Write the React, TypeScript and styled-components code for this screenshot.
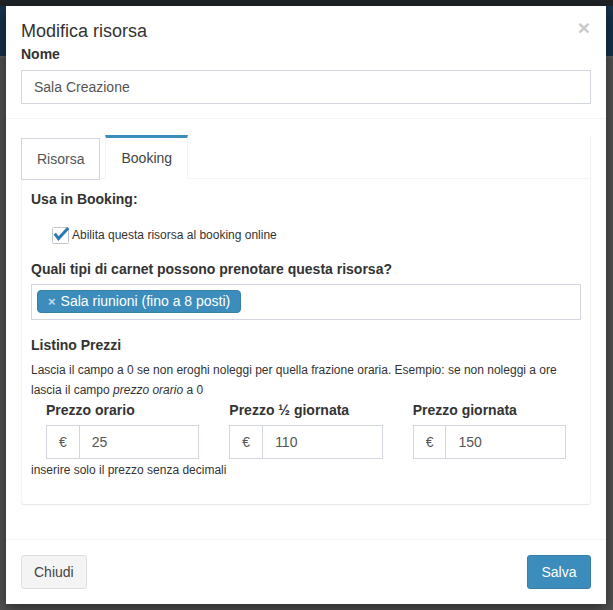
import React from "react";
import styled, { createGlobalStyle } from "styled-components";

const GlobalStyle = createGlobalStyle`
  html, body {
    margin: 0;
    padding: 0;
  }
  body {
    font-family: "Liberation Sans", Arial, sans-serif;
    font-size: 14px;
    line-height: 20px;
    color: #333;
    background: #515151;
  }
  * {
    box-sizing: border-box;
  }
`;

const Backdrop = styled.div`
  min-height: 610px;
  padding: 6px 0 0 6px;
  overflow: hidden;
  background: linear-gradient(
    to bottom,
    #1f2326 0,
    #1f2326 6px,
    #17324a 6px,
    #17324a 56px,
    #5d5d5d 56px,
    #5d5d5d 58px,
    #535353 58px
  );
`;

const Modal = styled.div`
  width: 600px;
  background: #fff;
  box-shadow: 0 5px 15px rgba(0, 0, 0, 0.5);
`;

const Header = styled.div`
  padding: 15px 15px 14px;
  border-bottom: 1px solid #f4f4f4;
`;

const TitleRow = styled.div`
  display: flex;
  justify-content: space-between;
  align-items: flex-start;
  margin-bottom: 3px;
`;

const Title = styled.h4`
  margin: 0;
  font-size: 18px;
  line-height: 20px;
  font-weight: 400;
  color: #333;
`;

const Close = styled.button`
  margin: -4px 1px 0 0;
  padding: 0;
  border: 0;
  background: none;
  font-family: inherit;
  font-size: 21px;
  font-weight: 700;
  line-height: 1;
  color: #c8c8c8;
  cursor: pointer;
`;

const FieldLabel = styled.label<{ $mt?: number; $mb?: number }>`
  display: block;
  margin-top: ${(p) => p.$mt ?? 0}px;
  margin-bottom: ${(p) => p.$mb ?? 5}px;
  font-weight: 700;
  color: #333;
`;

const TextInput = styled.input`
  display: block;
  width: 100%;
  height: 34px;
  padding: 6px 12px;
  border: 1px solid #d2d6de;
  border-radius: 0;
  font-family: inherit;
  font-size: 14px;
  line-height: 20px;
  color: #555;
  background: #fff;
  outline: none;
`;

const Body = styled.div`
  padding: 16px 15px 15px;
`;

const TabBox = styled.div`
  margin-bottom: 20px;
  background: #fff;
  border-radius: 3px;
  box-shadow: inset 1px 0 0 #f4f4f4, inset -1px 0 0 #f4f4f4,
    0 1px 1px rgba(0, 0, 0, 0.1);
`;

const TabNav = styled.div`
  display: flex;
  align-items: flex-end;
  gap: 5px;
  border-bottom: 1px solid #f4f4f4;
`;

const Tab = styled.div<{ $active?: boolean }>`
  padding: 10px 15px;
  background: #fff;
  color: ${(p) => (p.$active ? "#444" : "#555")};
  border: 1px solid ${(p) => (p.$active ? "#f4f4f4" : "#d2d6de")};
  border-top: ${(p) => (p.$active ? "3px solid #3c8dbc" : "1px solid #d2d6de")};
  border-bottom-color: ${(p) => (p.$active ? "#fff" : "#d2d6de")};
  margin-bottom: ${(p) => (p.$active ? -1 : -2)}px;
  cursor: pointer;
`;

const TabContent = styled.div`
  padding: 10px;
`;

const CheckRow = styled.label`
  display: flex;
  align-items: center;
  margin-top: 16px;
  padding-left: 21px;
  font-size: 12px;
  line-height: 20px;
  color: #333;

  svg {
    margin-right: 3px;
    overflow: visible;
  }
`;

const SelectBox = styled.div`
  display: flex;
  align-items: flex-start;
  height: 36px;
  padding: 5px 5px 0;
  border: 1px solid #d2d6de;
  background: #fff;
`;

const Choice = styled.span`
  display: inline-flex;
  align-items: center;
  height: 23px;
  padding: 0 10px;
  border: 1px solid #367fa9;
  border-radius: 4px;
  background: #3c8dbc;
  color: #fff;
  font-size: 14px;
  line-height: 21px;
`;

const ChoiceRemove = styled.span`
  margin-right: 5px;
  font-size: 13px;
  font-weight: 700;
  color: rgba(255, 255, 255, 0.7);
`;

const Help = styled.div<{ $mt?: number; $mb?: number }>`
  margin-top: ${(p) => p.$mt ?? 0}px;
  margin-bottom: ${(p) => p.$mb ?? 0}px;
  font-size: 12px;
  line-height: 20px;
  color: #333;
`;

const PriceGrid = styled.div`
  display: grid;
  grid-template-columns: repeat(3, 1fr);
`;

const PriceCol = styled.div`
  padding: 0 15px;
`;

const InputGroup = styled.div`
  display: flex;
  height: 34px;
`;

const Addon = styled.span`
  display: flex;
  align-items: center;
  padding: 6px 12px;
  border: 1px solid #d2d6de;
  border-right: 0;
  color: #555;
  background: #fff;
`;

const GroupInput = styled(TextInput)`
  flex: 1;
  min-width: 0;
`;

const Footer = styled.div`
  display: flex;
  justify-content: space-between;
  align-items: center;
  padding: 15px;
  border-top: 1px solid #f4f4f4;
`;

const Button = styled.button<{ $primary?: boolean }>`
  min-width: 64px;
  height: 34px;
  padding: 6px 12px;
  border-radius: 3px;
  border: 1px solid ${(p) => (p.$primary ? "#367fa9" : "#ddd")};
  background: ${(p) => (p.$primary ? "#3c8dbc" : "#f4f4f4")};
  color: ${(p) => (p.$primary ? "#fff" : "#444")};
  font-family: inherit;
  font-size: 14px;
  line-height: 20px;
  cursor: pointer;
`;

const CheckIcon = () => (
  <svg width="17" height="17" viewBox="0 0 17 17">
    <rect x="0.5" y="0.5" width="16" height="16" rx="1" fill="#fff" stroke="#c4c4c4" />
    <path
      d="M2.8 6.6 L6.5 11.6 L16.2 1"
      fill="none"
      stroke="#2a7ab0"
      strokeWidth="3"
      strokeLinejoin="miter"
    />
  </svg>
);

const prices = [
  { label: "Prezzo orario", value: "25" },
  { label: "Prezzo ½ giornata", value: "110" },
  { label: "Prezzo giornata", value: "150" },
];

export default function App() {
  return (
    <>
      <GlobalStyle />
      <Backdrop>
        <Modal>
          <Header>
            <TitleRow>
              <Title>Modifica risorsa</Title>
              <Close aria-label="Chiudi">×</Close>
            </TitleRow>
            <FieldLabel $mb={6}>Nome</FieldLabel>
            <TextInput defaultValue="Sala Creazione" />
          </Header>

          <Body>
            <TabBox>
              <TabNav>
                <Tab>Risorsa</Tab>
                <Tab $active>Booking</Tab>
              </TabNav>
              <TabContent>
                <FieldLabel $mb={0}>Usa in Booking:</FieldLabel>
                <CheckRow>
                  <CheckIcon />
                  Abilita questa risorsa al booking online
                </CheckRow>

                <FieldLabel $mt={14}>
                  Quali tipi di carnet possono prenotare questa risorsa?
                </FieldLabel>
                <SelectBox>
                  <Choice>
                    <ChoiceRemove>×</ChoiceRemove>
                    Sala riunioni (fino a 8 posti)
                  </Choice>
                </SelectBox>

                <FieldLabel $mt={15}>Listino Prezzi</FieldLabel>
                <Help>
                  Lascia il campo a 0 se non eroghi noleggi per quella frazione
                  oraria. Esempio: se non noleggi a ore lascia il campo{" "}
                  <i>prezzo orario</i> a 0
                </Help>
                <PriceGrid>
                  {prices.map((p) => (
                    <PriceCol key={p.label}>
                      <FieldLabel>{p.label}</FieldLabel>
                      <InputGroup>
                        <Addon>€</Addon>
                        <GroupInput defaultValue={p.value} />
                      </InputGroup>
                    </PriceCol>
                  ))}
                </PriceGrid>
                <Help $mt={1} $mb={14}>
                  inserire solo il prezzo senza decimali
                </Help>
              </TabContent>
            </TabBox>
          </Body>

          <Footer>
            <Button>Chiudi</Button>
            <Button $primary>Salva</Button>
          </Footer>
        </Modal>
      </Backdrop>
    </>
  );
}
